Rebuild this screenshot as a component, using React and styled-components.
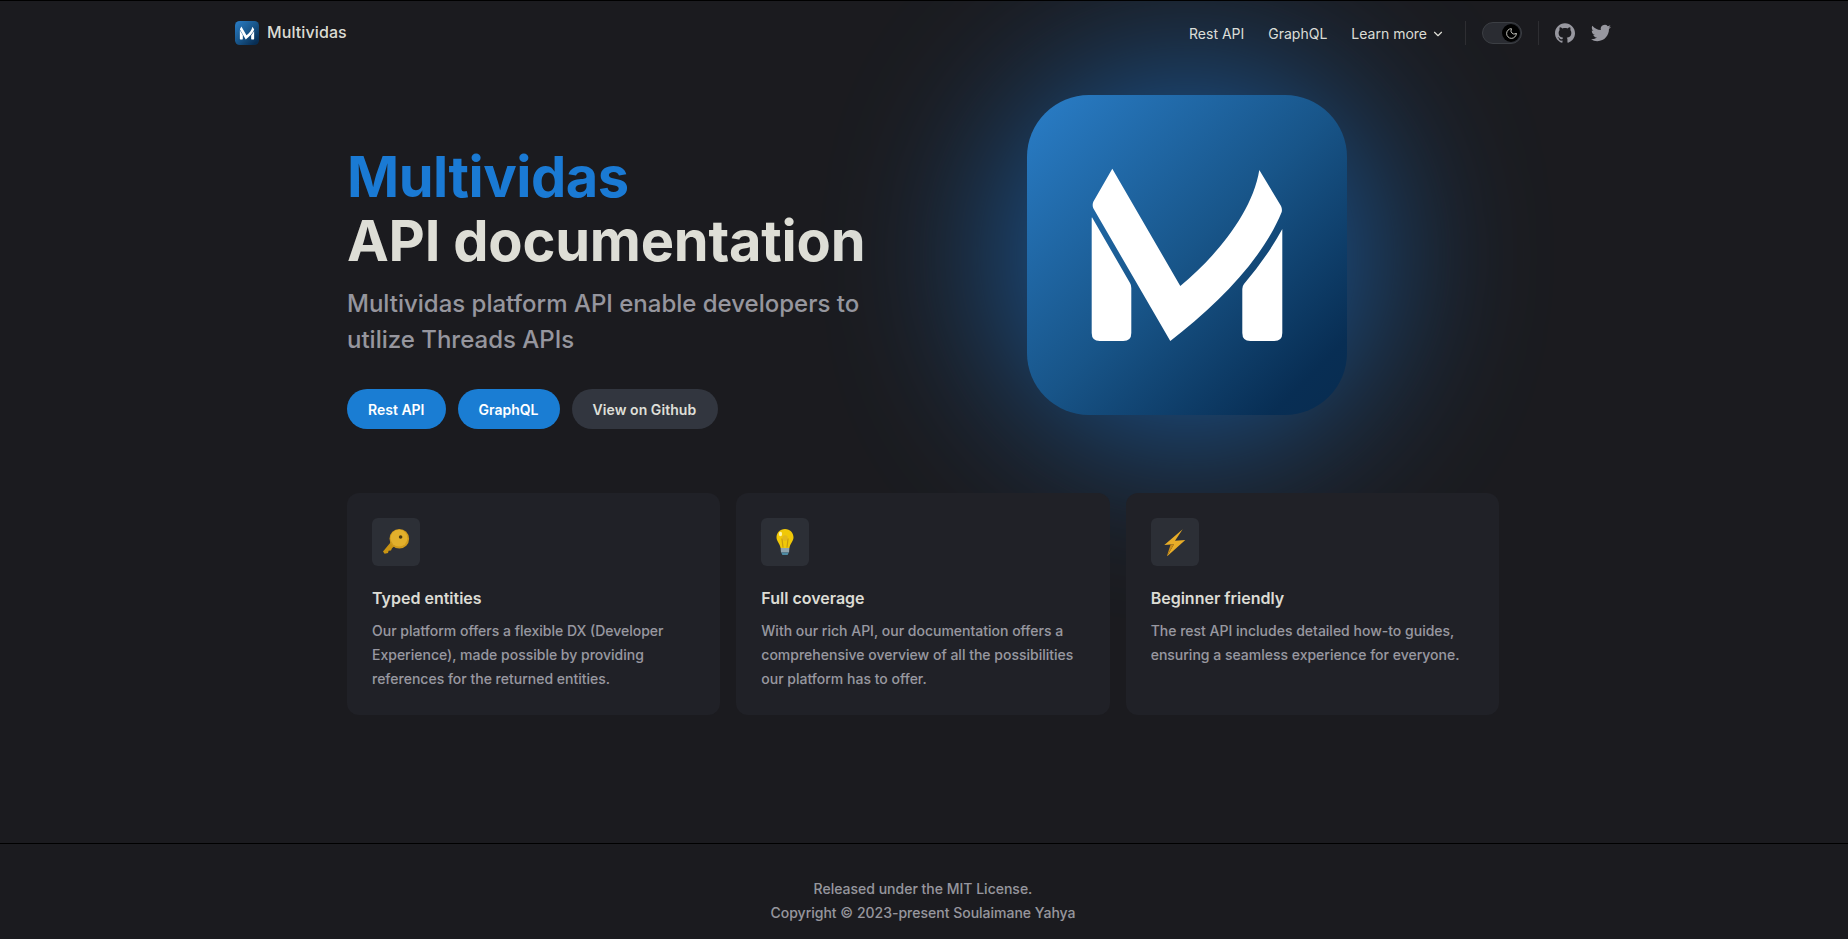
import React from 'react';
import styled, { createGlobalStyle } from 'styled-components';
import { ChevronDown, Moon } from 'lucide-react';

const GlobalStyle = createGlobalStyle`
    html, body {
        margin: 0;
        background: #1b1b1f;
        font-family: Inter, "Noto Sans", sans-serif;
        font-synthesis: none;
        text-rendering: optimizeLegibility;
    }
`;

const Page = styled.div`
    position: relative;
    display: flex;
    flex-direction: column;
    min-height: 939px;
    overflow: hidden;
    box-sizing: border-box;
    padding-right: 2px;
    border-top: 1px solid #000;
    color: rgba(255, 255, 245, 0.86);
`;

const NavBar = styled.header`
    position: relative;
    z-index: 2;
    display: flex;
    align-items: center;
    justify-content: space-between;
    width: 1376px;
    height: 64px;
    margin: 0 auto;
`;

const Brand = styled.a`
    display: flex;
    align-items: center;
    gap: 8px;
    font-size: 16px;
    font-weight: 500;
    letter-spacing: 0.1px;
`;

const BrandName = styled.span`
    padding-bottom: 2px;
`;

const NavRight = styled.nav`
    display: flex;
    align-items: center;
`;

const NavLink = styled.a`
    display: flex;
    align-items: center;
    padding: 1px 12px 0;
    font-size: 14px;
    font-weight: 400;
    line-height: 63px;
    svg { margin-left: 4px; }
`;

const Divider = styled.span`
    width: 1px;
    height: 24px;
    margin: 0 16px 0 ${p => p.$left || 16}px;
    background: #2e2e32;
`;

const Switch = styled.div`
    display: flex;
    justify-content: flex-end;
    align-items: center;
    box-sizing: border-box;
    width: 40px;
    height: 22px;
    padding: 1px;
    border: 1px solid #3c3f44;
    border-radius: 11px;
    background: #2a2c32;
`;

const Knob = styled.span`
    display: flex;
    align-items: center;
    justify-content: center;
    width: 18px;
    height: 18px;
    border-radius: 50%;
    background: #000;
    color: rgba(255, 255, 245, 0.86);
`;

const Social = styled.a`
    display: flex;
    margin-left: ${p => p.$gap || 0}px;
    color: rgba(235, 235, 245, 0.6);
`;

const Main = styled.main`
    position: relative;
    z-index: 1;
    flex: 1;
    width: 1152px;
    margin: 0 auto;
    padding-top: 80px;
`;

const Hero = styled.section`
    display: grid;
    grid-template-columns: 1fr 320px;
    padding-right: 152px;
`;

const HeroText = styled.div`
    display: flex;
    flex-direction: column;
`;

const Title = styled.h1`
    margin: 0;
    font-size: 56px;
    font-weight: 700;
    line-height: 64px;
    letter-spacing: -0.22px;
`;

const Name = styled.span`
    display: block;
    letter-spacing: -0.5px;
    color: #1a7ad4;
`;

const Tagline = styled.p`
    width: 520px;
    margin: 0;
    padding-top: 13px;
    font-size: 24px;
    font-weight: 500;
    line-height: 36px;
    color: rgba(235, 235, 245, 0.6);
`;

const Actions = styled.div`
    display: flex;
    gap: 12px;
    padding-top: 31px;
`;

const Button = styled.a`
    box-sizing: border-box;
    height: 40px;
    padding: 0 ${p => (p.$alt ? '22px 0 21px' : '21px')};
    border-radius: 20px;
    font-size: 14px;
    font-weight: 600;
    letter-spacing: ${p => (p.$alt ? '0.07px' : '0')};
    line-height: 42px;
    background: ${p => (p.$alt ? '#32363f' : '#1a7dd3')};
    color: ${p => (p.$alt ? 'rgba(255, 255, 245, 0.86)' : '#fff')};
`;

const HeroImage = styled.div`
    position: relative;
    width: 320px;
    height: 320px;
    margin-top: -50px;
`;

const Glow = styled.div`
    position: absolute;
    top: 50%;
    left: 50%;
    width: 380px;
    height: 380px;
    border-radius: 50%;
    background: #1976d2;
    opacity: 0.68;
    filter: blur(85px);
    transform: translate(-50%, -50%);
`;

const LogoSvg = styled.svg`
    position: relative;
    display: block;
`;

const Features = styled.section`
    display: grid;
    grid-template-columns: repeat(3, 1fr);
    gap: 16px;
    padding-top: 64px;
`;

const Card = styled.article`
    position: relative;
    box-sizing: border-box;
    height: 222px;
    padding: 25px;
    border-radius: 12px;
    background: #202127;
`;

const IconBox = styled.div`
    display: flex;
    align-items: center;
    justify-content: center;
    width: 48px;
    height: 48px;
    margin-bottom: 20px;
    border-radius: 6px;
    background: #2c2f36;
`;

const CardTitle = styled.h2`
    margin: 0;
    font-size: 16px;
    font-weight: 600;
    line-height: 24px;
`;

const CardText = styled.p`
    margin: 9px 0 0;
    font-size: 14px;
    font-weight: 500;
    line-height: 24px;
    color: rgba(235, 235, 245, 0.6);
`;

const Footer = styled.footer`
    position: relative;
    z-index: 1;
    margin-right: -2px;
    padding: 33px 2px 14px 0;
    border-top: 1px solid #000;
    background: #1b1b1f;
    text-align: center;
    font-size: 14px;
    font-weight: 500;
    line-height: 24px;
    color: rgba(235, 235, 245, 0.6);
`;

const FooterLine = styled.p`
    margin: 0;
`;

const Logo = ({ size, id }) => (
    <LogoSvg width={size} height={size} viewBox="0 0 320 320">
        <defs>
            <linearGradient id={id} x1="0" y1="0" x2="1" y2="1">
                <stop offset="0" stopColor="#2a7ec8" />
                <stop offset="0.5" stopColor="#185589" />
                <stop offset="0.88" stopColor="#082e54" />
                <stop offset="1" stopColor="#082c50" />
            </linearGradient>
        </defs>
        <rect width="320" height="320" rx="62" fill={`url(#${id})`} />
        <g fill="#fff">
            <path d="M85.3 73.7 L153.3 191 C185 165 225 120 232.3 75 L254 111 Q255.4 114 254.7 117 C235 165 190 210 143.3 246 L66.3 113.3 Q65 110 66.3 106.7 Z" />
            <path d="M65 122.3 L103 188 Q104.3 190 104.3 193 L104.3 238 Q104.3 246 96.3 246 L72.7 246 Q64.7 246 64.7 238 L64.7 123 Z" />
            <path d="M255.3 134 L255.3 238 Q255.3 246 247.3 246 L223.3 246 Q215.3 246 215.3 238 L215.3 194 Q215.3 191 217 189 Q240 162 255.3 134 Z" />
        </g>
    </LogoSvg>
);

const KeyIcon = () => (
    <svg width="28" height="28" viewBox="0 0 28 28">
        <path d="M1 23.5 L2.6 25.8 L6 25 L6.6 22.8 L9 22.4 L10 20.2 L15 16 L11 11.6 Z" fill="#c99413" />
        <circle cx="17.3" cy="10.7" r="9.8" fill="#cf9a1c" />
        <circle cx="17" cy="10.2" r="8.4" fill="#e2b02c" />
        <circle cx="18.6" cy="9" r="1.8" fill="#4a3a12" />
    </svg>
);

const BulbIcon = () => (
    <svg width="28" height="28" viewBox="0 0 28 28">
        <path d="M14 1 C8.8 1 5.5 5 5.5 9.2 C5.5 13.5 9 15.5 9.6 20 L18.4 20 C19 15.5 22.5 13.5 22.5 9.2 C22.5 5 19.2 1 14 1 Z" fill="#f0c808" />
        <path d="M12 19.5 L11 11 L17 11 L16 19.5" fill="none" stroke="#c79c10" strokeWidth="1.2" />
        <circle cx="14" cy="10" r="2.8" fill="#e2b81c" />
        <path d="M9.6 20 L18.4 20 L18 24.4 L10 24.4 Z" fill="#90a4ae" />
        <path d="M10.2 24.4 L17.8 24.4 L16.6 27 L11.4 27 Z" fill="#4d8aa3" />
        <ellipse cx="9.5" cy="6" rx="1.6" ry="2.2" fill="#fff4a8" />
    </svg>
);

const BoltIcon = () => (
    <svg width="28" height="28" viewBox="0 0 28 28">
        <path d="M21.7 1.3 L3.3 17 L13 16.3 L5.7 28.7 L24.3 12 L14 12.7 Z" fill="#e8ad28" />
        <path d="M5.7 28.7 L13 16.3 L9.6 16.6 Z" fill="#cc8d16" />
    </svg>
);

const GithubIcon = () => (
    <svg width="20" height="20" viewBox="0 0 24 24" fill="currentColor">
        <path d="M12 .297c-6.63 0-12 5.373-12 12 0 5.303 3.438 9.8 8.205 11.385.6.113.82-.258.82-.577 0-.285-.01-1.04-.015-2.04-3.338.724-4.042-1.61-4.042-1.61C4.422 18.07 3.633 17.7 3.633 17.7c-1.087-.744.084-.729.084-.729 1.205.084 1.838 1.236 1.838 1.236 1.07 1.835 2.809 1.305 3.495.998.108-.776.417-1.305.76-1.605-2.665-.3-5.466-1.332-5.466-5.93 0-1.31.465-2.38 1.235-3.22-.135-.303-.54-1.523.105-3.176 0 0 1.005-.322 3.3 1.23.96-.267 1.98-.399 3-.405 1.02.006 2.04.138 3 .405 2.28-1.552 3.285-1.23 3.285-1.23.645 1.653.24 2.873.12 3.176.765.84 1.23 1.91 1.23 3.22 0 4.61-2.805 5.625-5.475 5.92.42.36.81 1.096.81 2.22 0 1.606-.015 2.896-.015 3.286 0 .315.21.69.825.57C20.565 22.092 24 17.592 24 12.297c0-6.627-5.373-12-12-12" />
    </svg>
);

const TwitterIcon = () => (
    <svg width="20" height="20" viewBox="0 0 24 24" fill="currentColor">
        <path d="M23.953 4.57a10 10 0 01-2.825.775 4.958 4.958 0 002.163-2.723c-.951.555-2.005.959-3.127 1.184a4.92 4.92 0 00-8.384 4.482C7.69 8.095 4.067 6.13 1.64 3.162a4.822 4.822 0 00-.666 2.475c0 1.71.87 3.213 2.188 4.096a4.904 4.904 0 01-2.228-.616v.06a4.923 4.923 0 003.946 4.827 4.996 4.996 0 01-2.212.085 4.936 4.936 0 004.604 3.417 9.867 9.867 0 01-6.102 2.105c-.39 0-.779-.023-1.17-.067a13.995 13.995 0 007.557 2.209c9.053 0 13.998-7.496 13.998-13.985 0-.21 0-.42-.015-.63A9.935 9.935 0 0024 4.59z" />
    </svg>
);

const features = [
    {
        icon: <KeyIcon />,
        title: 'Typed entities',
        text: 'Our platform offers a flexible DX (Developer Experience), made possible by providing references for the returned entities.',
    },
    {
        icon: <BulbIcon />,
        title: 'Full coverage',
        text: 'With our rich API, our documentation offers a comprehensive overview of all the possibilities our platform has to offer.',
    },
    {
        icon: <BoltIcon />,
        title: 'Beginner friendly',
        text: 'The rest API includes detailed how-to guides, ensuring a seamless experience for everyone.',
    },
];

export default function App() {
    return (
        <Page>
            <GlobalStyle />
            <NavBar>
                <Brand>
                    <Logo size={24} id="logo-small" />
                    <BrandName>Multividas</BrandName>
                </Brand>
                <NavRight>
                    <NavLink>Rest API</NavLink>
                    <NavLink>GraphQL</NavLink>
                    <NavLink>Learn more<ChevronDown size={14} /></NavLink>
                    <Divider $left={8} />
                    <Switch>
                        <Knob><Moon size={13} strokeWidth={1.6} /></Knob>
                    </Switch>
                    <Divider />
                    <Social><GithubIcon /></Social>
                    <Social $gap={16}><TwitterIcon /></Social>
                </NavRight>
            </NavBar>
            <Main>
                <Hero>
                    <HeroText>
                        <Title>
                            <Name>Multividas</Name>
                            API documentation
                        </Title>
                        <Tagline>Multividas platform API enable developers to utilize Threads APIs</Tagline>
                        <Actions>
                            <Button>Rest API</Button>
                            <Button>GraphQL</Button>
                            <Button $alt>View on Github</Button>
                        </Actions>
                    </HeroText>
                    <HeroImage>
                        <Glow />
                        <Logo size={320} id="logo-large" />
                    </HeroImage>
                </Hero>
                <Features>
                    {features.map(f => (
                        <Card key={f.title}>
                            <IconBox>{f.icon}</IconBox>
                            <CardTitle>{f.title}</CardTitle>
                            <CardText>{f.text}</CardText>
                        </Card>
                    ))}
                </Features>
            </Main>
            <Footer>
                <FooterLine>Released under the MIT License.</FooterLine>
                <FooterLine>Copyright © 2023-present Soulaimane Yahya</FooterLine>
            </Footer>
        </Page>
    );
}
